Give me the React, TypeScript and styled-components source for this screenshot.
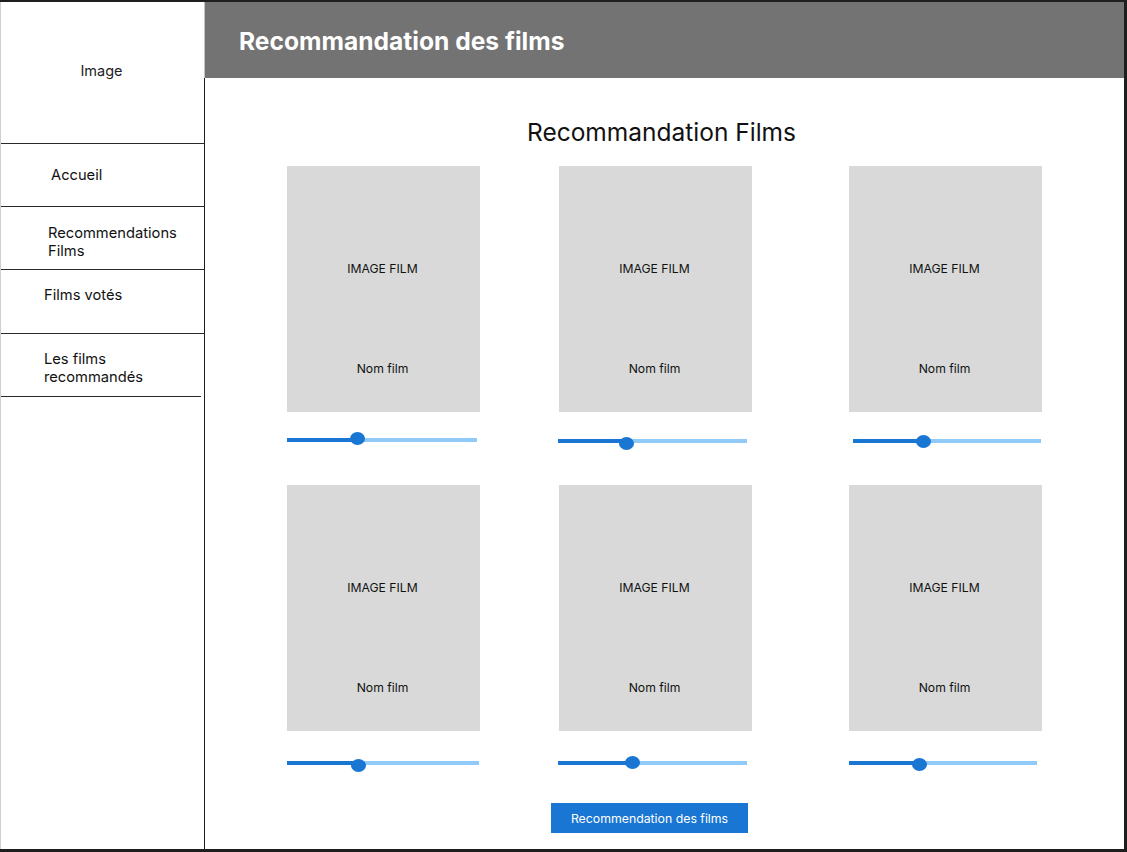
import React from "react";
import styled, { createGlobalStyle } from "styled-components";

const Global = createGlobalStyle`
  html, body { margin: 0; padding: 0; background: #1e1e1e; overflow: hidden; }
  body { font-family: Inter, "Noto Sans", Arial, sans-serif; color: #111; }
  * { box-sizing: border-box; }
`;

const Frame = styled.div`
  width: 1127px;
  height: 852px;
  padding: 2px 3px 3px 0;
  background: #1e1e1e;
`;

const Layout = styled.div`
  display: grid;
  grid-template-columns: 203px 1fr;
  height: 100%;
  background: #fff;
  border-left: 1px solid #cfcfcf;
`;

const Sidebar = styled.nav`
  display: flex;
  flex-direction: column;
  background: #fff;
`;

const LogoBox = styled.div`
  height: 142px;
  display: flex;
  align-items: flex-start;
  justify-content: center;
  padding-top: 60px;
  padding-right: 2px;
  font-size: 14.5px;
  color: #222;
  border-bottom: 1.5px solid #2a2a2a;
`;

const NavItem = styled.div<{ $indent: number; $height: number; $lift?: number; $drop?: number; $lineWidth?: number }>`
  height: ${(p) => p.$height}px;
  display: flex;
  align-items: center;
  padding-left: ${(p) => p.$indent}px;
  padding-bottom: ${(p) => p.$lift ?? 0}px;
  padding-top: ${(p) => p.$drop ?? 0}px;
  font-size: 14.7px;
  line-height: 18px;
  color: #111;
  border-bottom: 1.5px solid #2a2a2a;
  width: ${(p) => p.$lineWidth ?? 203}px;
`;

const Main = styled.main`
  display: flex;
  flex-direction: column;
  border-left: 1px solid #1e1e1e;
  min-width: 0;
`;

const Header = styled.header`
  height: 76px;
  background: #737373;
  display: flex;
  align-items: center;
  padding-left: 34px;
  padding-top: 2px;
  margin-left: -1px;
  border-left: 1px solid #c4c4c4;
`;

const HeaderTitle = styled.h1`
  margin: 0;
  color: #fff;
  font-size: 24.6px;
  font-weight: 700;
  letter-spacing: 0;
`;

const PageTitle = styled.h2`
  margin: 39px 0 0;
  text-align: center;
  font-size: 24.5px;
  font-weight: 400;
  line-height: 30px;
  color: #111;
  padding-right: 6px;
`;

const Grid = styled.div`
  display: grid;
  grid-template-columns: 272px 290px 193px;
  row-gap: 1px;
  padding-left: 82px;
  margin-top: 19px;
`;

const Cell = styled.div`
  display: flex;
  flex-direction: column;
`;

const Card = styled.div`
  width: 193px;
  height: 246px;
  background: #d9d9d9;
  display: flex;
  flex-direction: column;
  align-items: center;
  padding-top: 95px;
  padding-right: 2px;
  font-size: 12.2px;
  line-height: 15px;
  color: #111;
`;

const CardName = styled.div`
  margin-top: 85px;
`;

const SliderArea = styled.div`
  height: 72px;
`;

const Track = styled.div<{ $top: number; $left: number; $w: number; $v: number }>`
  position: relative;
  margin-top: ${(p) => p.$top}px;
  margin-left: ${(p) => p.$left}px;
  width: ${(p) => p.$w}px;
  height: 4px;
  background: linear-gradient(
    to right,
    #1976d2 0,
    #1976d2 ${(p) => p.$v}px,
    #90caf9 ${(p) => p.$v}px,
    #90caf9 100%
  );
`;

const Thumb = styled.span<{ $v: number; $dy: number }>`
  position: absolute;
  left: ${(p) => p.$v - 7.5}px;
  top: ${(p) => 2 + p.$dy - 6.5}px;
  width: 15px;
  height: 13px;
  border-radius: 50%;
  background: #1976d2;
`;

const ButtonRow = styled.div`
  padding-left: 346px;
`;

const Button = styled.button`
  width: 197px;
  height: 30px;
  border: none;
  background: #1976d2;
  color: #fff;
  font-family: Inter, "Noto Sans", Arial, sans-serif;
  font-size: 12.3px;
  padding: 0;
`;

type S = { top: number; left: number; w: number; v: number; dy: number };

const sliders: S[] = [
  { top: 26, left: 0, w: 190, v: 70, dy: -1.5 },
  { top: 27, left: -1, w: 189, v: 68, dy: 2.5 },
  { top: 27, left: 4, w: 188, v: 70, dy: 0 },
  { top: 30, left: 0, w: 192, v: 71.5, dy: 2.5 },
  { top: 30, left: -1, w: 189, v: 74, dy: -1 },
  { top: 30, left: 0, w: 188, v: 70.5, dy: 1 },
];

export default function App() {
  return (
    <>
      <Global />
      <Frame>
        <Layout>
          <Sidebar>
            <LogoBox>Image</LogoBox>
            <NavItem $indent={50} $height={63}>Accueil</NavItem>
            <NavItem $indent={47} $height={63} $drop={8}>
              Recommendations
              <br />
              Films
            </NavItem>
            <NavItem $indent={43} $height={64} $lift={14}>Films votés</NavItem>
            <NavItem $indent={43} $height={63} $drop={6} $lineWidth={200}>
              Les films
              <br />
              recommandés
            </NavItem>
          </Sidebar>
          <Main>
            <Header>
              <HeaderTitle>Recommandation des films</HeaderTitle>
            </Header>
            <PageTitle>Recommandation Films</PageTitle>
            <Grid>
              {sliders.map((s, i) => (
                <Cell key={i}>
                  <Card>
                    <div>IMAGE FILM</div>
                    <CardName>Nom film</CardName>
                  </Card>
                  <SliderArea>
                    <Track $top={s.top} $left={s.left} $w={s.w} $v={s.v}>
                      <Thumb $v={s.v} $dy={s.dy} />
                    </Track>
                  </SliderArea>
                </Cell>
              ))}
            </Grid>
            <ButtonRow>
              <Button>Recommendation des films</Button>
            </ButtonRow>
          </Main>
        </Layout>
      </Frame>
    </>
  );
}
